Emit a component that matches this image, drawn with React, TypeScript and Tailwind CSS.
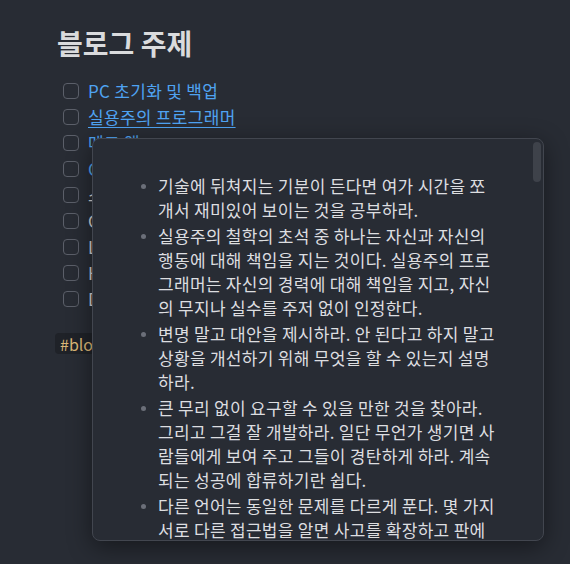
import React from "react";

const items: { text: string; link: boolean; hover?: boolean }[] = [
  { text: "PC 초기화 및 백업", link: true },
  { text: "실용주의 프로그래머", link: true, hover: true },
  { text: "메모 앱", link: true },
  { text: "CS 기초 정리", link: true },
  { text: "스터디 기록", link: false },
  { text: "Git 사용법", link: false },
  { text: "Linux 명령어", link: false },
  { text: "HTTP 정리", link: false },
  { text: "Docker 입문", link: false },
];

const quotes = [
  "기술에 뒤쳐지는 기분이 든다면 여가 시간을 쪼개서 재미있어 보이는 것을 공부하라.",
  "실용주의 철학의 초석 중 하나는 자신과 자신의 행동에 대해 책임을 지는 것이다. 실용주의 프로그래머는 자신의 경력에 대해 책임을 지고, 자신의 무지나 실수를 주저 없이 인정한다.",
  "변명 말고 대안을 제시하라. 안 된다고 하지 말고 상황을 개선하기 위해 무엇을 할 수 있는지 설명하라.",
  "큰 무리 없이 요구할 수 있을 만한 것을 찾아라. 그리고 그걸 잘 개발하라. 일단 무언가 생기면 사람들에게 보여 주고 그들이 경탄하게 하라. 계속되는 성공에 합류하기란 쉽다.",
  "다른 언어는 동일한 문제를 다르게 푼다. 몇 가지 서로 다른 접근법을 알면 사고를 확장하고 판에 박힌 생각에서 벗어나는 데 도움이 된다.",
];

export default function App() {
  return (
    <div
      className="relative w-[570px] h-[564px] overflow-hidden bg-[#282c34] text-[#dcddde]"
      style={{ fontFamily: '"Noto Sans CJK KR", "Noto Sans", sans-serif' }}
    >
      <div className="pl-[57px] pt-[24px]">
        <h1 className="text-[28px] leading-[38px] font-bold text-[#dadbdd]">블로그 주제</h1>
        <ul className="mt-[16px] pl-[6px]">
          {items.map((it, i) => (
            <li key={i} className="flex items-center h-[26px] gap-[9px]">
              <span className="w-[16px] h-[16px] rounded-[4px] border border-[#5b5f69] shrink-0" />
              <span
                className={
                  "text-[17px] leading-[24px] tracking-[0.3px] " +
                  (it.link ? "text-[#4fa3f2]" : "text-[#d4d5d8]") +
                  (it.hover ? " underline underline-offset-[3px]" : "")
                }
              >
                {it.text}
              </span>
            </li>
          ))}
        </ul>
        <div className="mt-[21px] -ml-[2px] inline-flex items-center h-[21px] px-[5px] rounded-[4px] bg-[#1f2228] text-[16px] text-[#dcb877]">
          #blog
        </div>
      </div>

      <div className="absolute left-[92px] top-[138px] w-[452px] h-[403px] rounded-[8px] border border-[#42464f] bg-[#282c34] shadow-[0_6px_24px_rgba(0,0,0,0.45)] overflow-hidden">
        <div className="absolute right-[2px] top-[3px] w-[8px] h-[40px] rounded-full bg-[#3e424a]" />
        <ul className="pt-[35px] pl-[48px] flex flex-col gap-[2px]">
          {quotes.map((q, i) => (
            <li key={i} className="flex items-start">
              <span className="mt-[10px] w-[5px] h-[5px] rounded-full bg-[#6b6f79] shrink-0" />
              <span className="ml-[12px] w-[341px] text-[17px] tracking-[0.3px] leading-[24px] text-[#dddee0]">{q}</span>
            </li>
          ))}
        </ul>
      </div>
    </div>
  );
}
